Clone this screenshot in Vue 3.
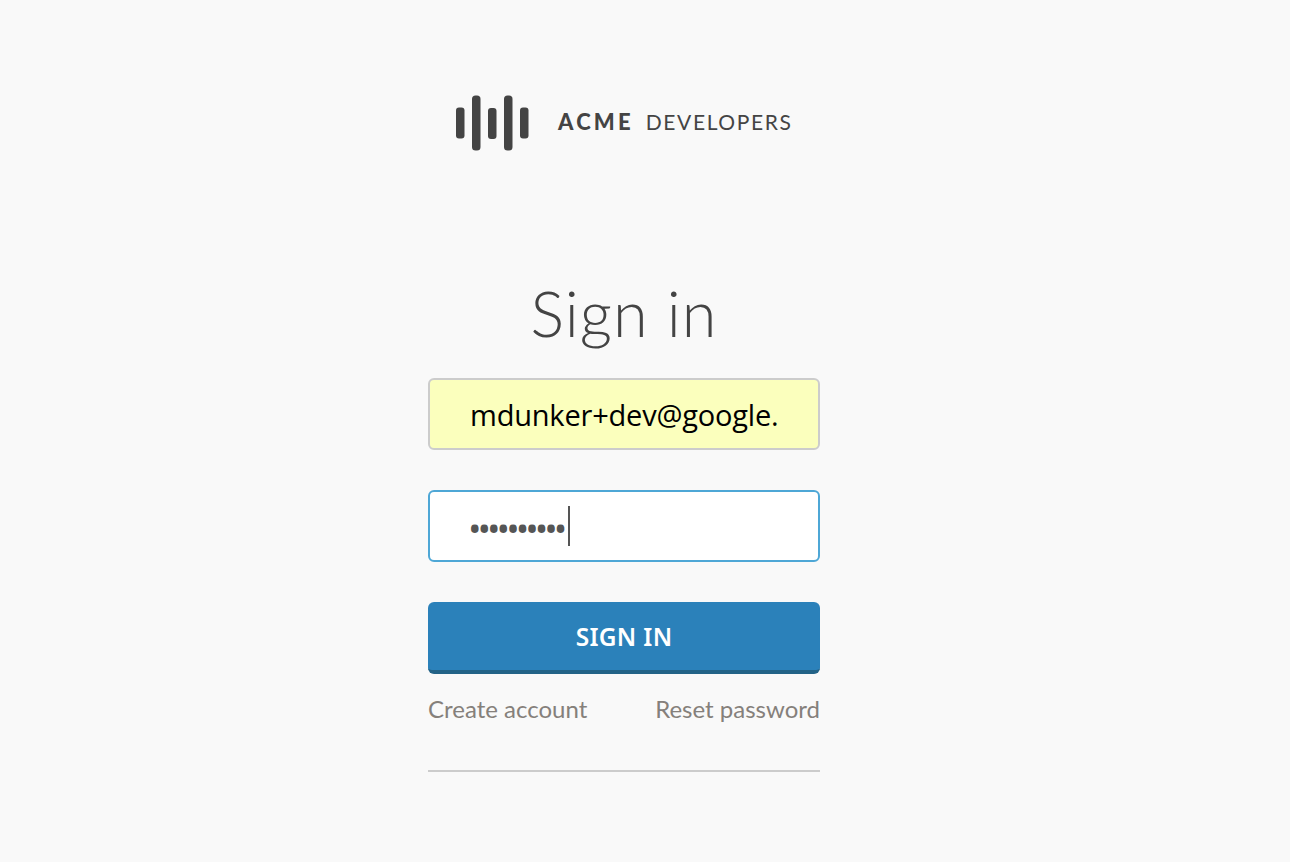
<script setup>
const email = 'mdunker+dev@google.com'
const password = 'secretpass'
</script>

<template>
  <div class="page">
    <div class="logo">
      <svg class="logo-mark" width="74" height="56" viewBox="0 0 74 56">
        <rect x="0" y="12.5" width="8.5" height="31" rx="3" />
        <rect x="16" y="0.5" width="8.5" height="55" rx="3.5" />
        <rect x="32" y="13" width="8.5" height="31" rx="3" />
        <rect x="48" y="0.5" width="8.5" height="55" rx="3.5" />
        <rect x="64" y="12.5" width="8.5" height="31" rx="3" />
      </svg>
      <div class="logo-text"><b>ACME</b> <span>DEVELOPERS</span></div>
    </div>

    <form class="form" @submit.prevent>
      <h1>Sign in</h1>
      <input class="field autofilled" type="text" :value="email" readonly />
      <div class="field-wrap">
        <input class="field focused" type="password" :value="password" readonly />
        <i class="caret"></i>
      </div>
      <button class="submit" type="submit">SIGN IN</button>
      <div class="links">
        <a href="#">Create account</a>
        <a href="#">Reset password</a>
      </div>
      <hr />
    </form>
  </div>
</template>

<style>
body {
  background: #f9f9f9;
}
</style>

<style scoped>
.page {
  height: 862px;
  box-sizing: border-box;
  padding: 95px 42px 0 0;
  background: #f9f9f9;
  display: flex;
  flex-direction: column;
  align-items: center;
  overflow: hidden;
  font-family: "Noto Sans", "Open Sans", sans-serif;
}

.logo {
  width: 336px;
  height: 56px;
  display: flex;
  align-items: center;
  gap: 28px;
  color: #444;
}

.logo-mark {
  flex: none;
  fill: #444;
}

.logo-text {
  font-family: Lato, sans-serif;
  font-size: 21px;
  line-height: 54px;
  height: 56px;
  letter-spacing: 1.6px;
  white-space: nowrap;
  word-spacing: 5px;
}

.logo-text b {
  font-size: 22px;
  font-weight: 900;
  letter-spacing: 3.2px;
}

.form {
  width: 392px;
  margin-top: 126px;
  display: flex;
  flex-direction: column;
}

h1 {
  margin: 0;
  height: 101px;
  font-family: Lato, sans-serif;
  font-weight: 300;
  font-size: 63px;
  line-height: 72px;
  letter-spacing: 1px;
  text-align: center;
  color: #444;
}

.field-wrap {
  position: relative;
  margin-top: 40px;
}

.field {
  display: block;
  width: 100%;
  height: 72px;
  box-sizing: border-box;
  padding: 0 40px;
  border-radius: 6px;
  outline: none;
  font-family: "Open Sans", sans-serif;
  font-size: 29px;
  letter-spacing: -0.2px;
}

.autofilled {
  border: 2px solid #ccc;
  background: #fbffbd;
  color: #000;
}

.focused {
  border: 2px solid #4ea7d6;
  padding: 4px 40px 0 38px;
  background: #fff;
  color: #555;
  font-size: 36px;
  letter-spacing: -4px;
}

.caret {
  position: absolute;
  left: 140px;
  top: 16px;
  width: 2px;
  height: 40px;
  background: #555;
}

.submit {
  margin-top: 40px;
  height: 72px;
  border: 0;
  border-bottom: 4px solid #236387;
  border-radius: 6px;
  background: #2b81ba;
  color: #fff;
  font-family: "Noto Sans", sans-serif;
  font-weight: 600;
  font-size: 24.5px;
  letter-spacing: 0.3px;
}

.links {
  display: flex;
  justify-content: space-between;
  margin-top: 17px;
  line-height: 36px;
}

.links a {
  color: #85807b;
  font-family: Lato, sans-serif;
  font-size: 24px;
  text-decoration: none;
}

hr {
  width: 100%;
  height: 2px;
  margin: 43px 0 0;
  border: 0;
  background: #ccc;
}
</style>
